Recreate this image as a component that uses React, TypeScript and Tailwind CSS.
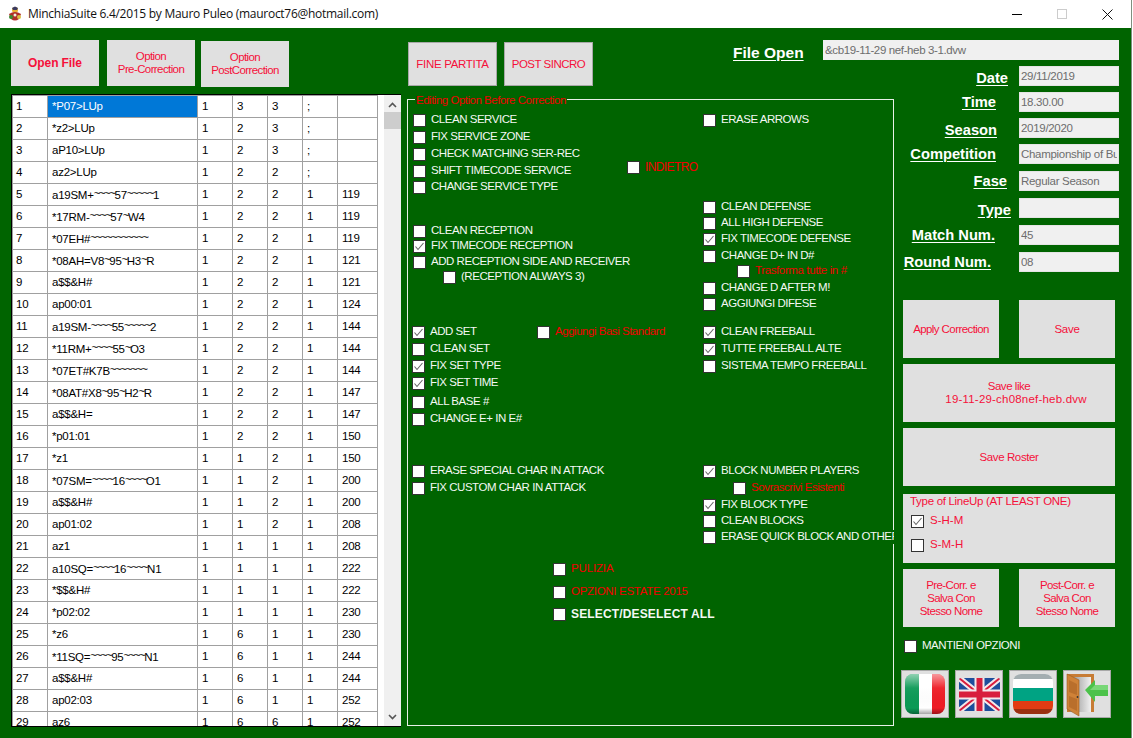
import { ReactNode } from "react";

const rows: string[][] = [
  ["1", "*P07>LUp", "1", "3", "3", ";", ""],
  ["2", "*z2>LUp", "1", "2", "3", ";", ""],
  ["3", "aP10>LUp", "1", "2", "3", ";", ""],
  ["4", "az2>LUp", "1", "2", "2", ";", ""],
  ["5", "a19SM+~~~~57~~~~~1", "1", "2", "2", "1", "119"],
  ["6", "*17RM-~~~~57~W4", "1", "2", "2", "1", "119"],
  ["7", "*07EH#~~~~~~~~~~~", "1", "2", "2", "1", "119"],
  ["8", "*08AH=V8~95~H3~R", "1", "2", "2", "1", "121"],
  ["9", "a$$&H#", "1", "2", "2", "1", "121"],
  ["10", "ap00:01", "1", "2", "2", "1", "124"],
  ["11", "a19SM-~~~~55~~~~~2", "1", "2", "2", "1", "144"],
  ["12", "*11RM+~~~~55~O3", "1", "2", "2", "1", "144"],
  ["13", "*07ET#K7B~~~~~~~", "1", "2", "2", "1", "144"],
  ["14", "*08AT#X8~95~H2~R", "1", "2", "2", "1", "147"],
  ["15", "a$$&H=", "1", "2", "2", "1", "147"],
  ["16", "*p01:01", "1", "2", "2", "1", "150"],
  ["17", "*z1", "1", "1", "2", "1", "150"],
  ["18", "*07SM=~~~~16~~~~O1", "1", "1", "2", "1", "200"],
  ["19", "a$$&H#", "1", "1", "2", "1", "200"],
  ["20", "ap01:02", "1", "1", "2", "1", "208"],
  ["21", "az1", "1", "1", "1", "1", "208"],
  ["22", "a10SQ=~~~~16~~~~N1", "1", "1", "1", "1", "222"],
  ["23", "*$$&H#", "1", "1", "1", "1", "222"],
  ["24", "*p02:02", "1", "1", "1", "1", "230"],
  ["25", "*z6", "1", "6", "1", "1", "230"],
  ["26", "*11SQ=~~~~95~~~~N1", "1", "6", "1", "1", "244"],
  ["27", "a$$&H#", "1", "6", "1", "1", "244"],
  ["28", "ap02:03", "1", "6", "1", "1", "252"],
  ["29", "az6", "1", "6", "6", "1", "252"],
];

// the tildes in the grid are narrow and sit high
function Code({ value }: { value: string }) {
  return (
    <>
      {value.split(/(~+)/).map((part, i) =>
        part.startsWith("~") ? (
          <span key={i} className="align-[2px] tracking-[-1.5px]">
            {part}
          </span>
        ) : (
          part
        )
      )}
    </>
  );
}

function Check({
  label,
  checked,
  red,
  bold,
  className = "",
  labelClass = "tracking-[-0.47px]",
}: {
  label: string;
  checked?: boolean;
  red?: boolean;
  bold?: boolean;
  className?: string;
  labelClass?: string;
}) {
  return (
    <div className={`flex h-[14px] shrink-0 items-center gap-[5px] whitespace-nowrap ${className}`}>
      <span className="flex h-[13px] w-[13px] shrink-0 items-center justify-center border border-[#333] bg-white">
        {checked && (
          <svg width="11" height="11" viewBox="0 0 11 11" fill="none">
            <path d="M1.5 5.5 L4 8.5 L9.5 2" stroke="#666" strokeWidth="1.1" />
          </svg>
        )}
      </span>
      <span className={`${red ? "text-[#f00000]" : "text-[#f4f8f4]"} ${bold ? "text-[12px] font-bold" : "text-[11.5px]"} ${labelClass}`}>
        {label}
      </span>
    </div>
  );
}

function Btn({ children, className = "" }: { children: ReactNode; className?: string }) {
  return (
    <button className={`flex items-center justify-center bg-[#e0e0e0] text-center text-[11.5px] leading-[13px] text-[#f5103a] ${className}`}>
      {children}
    </button>
  );
}

function Field({
  label,
  value,
  labelGap,
  className = "",
}: {
  label: string;
  value: string;
  labelGap: string;
  className?: string;
}) {
  return (
    <div className={`flex h-[20px] items-center justify-end ${className}`}>
      <span className={`text-[14.7px] font-bold text-white underline underline-offset-2 ${labelGap}`}>{label}</span>
      <input
        readOnly
        value={value}
        className="h-[20px] w-[100px] border border-[#e4e4e4] bg-[#f0f0f0] px-[1px] text-[11.5px] tracking-[-0.3px] text-[#6d6d6d] outline-none"
      />
    </div>
  );
}

function FlagButton({ children }: { children: ReactNode }) {
  return (
    <button className="h-[48px] w-[48px] border border-[#a8a8a8] bg-[#e0e0e0]">
      <svg width="46" height="46" viewBox="0 0 46 46">{children}</svg>
    </button>
  );
}

export default function App() {
  return (
    <div className="h-[738px] w-[1133px] overflow-hidden bg-white font-['Liberation_Sans',Arial,sans-serif] text-[11.5px]">
      <div className="flex h-[738px] w-[1132px] flex-col border-r border-[#7f8f7f]">
        {/* title bar */}
        <header className="flex h-[28px] shrink-0 items-center bg-white">
          <svg width="16" height="16" viewBox="0 0 16 16" className="ml-[7px]">
            <circle cx="8" cy="4" r="3" fill="#e8b030" />
            <path d="M5 2 L8 0.5 L11 2 L10 4 L6 4 Z" fill="#3a3a60" />
            <path d="M2 8 Q8 4 14 8 L12 13 Q8 16 4 13 Z" fill="#b03028" />
            <circle cx="4" cy="11" r="2" fill="#3c8a30" />
            <circle cx="12" cy="11" r="2" fill="#d8c040" />
            <circle cx="8" cy="9" r="1.5" fill="#f0f0e0" />
          </svg>
          <span className="ml-[5px] font-['Open_Sans',sans-serif] text-[12px] tracking-[-0.28px] text-[#111]">
            MinchiaSuite 6.4/2015 by Mauro Puleo (mauroct76@hotmail.com)
          </span>
          <div className="ml-auto flex items-center">
            <span className="h-px w-[10px] bg-black" />
            <span className="ml-[35px] h-[10px] w-[10px] border border-[#ccc]" />
            <svg width="11" height="11" viewBox="0 0 11 11" className="ml-[35px] mr-[18px]">
              <path d="M0.5 0.5 L10.5 10.5 M10.5 0.5 L0.5 10.5" stroke="#111" strokeWidth="1" />
            </svg>
          </div>
        </header>

        <main className="flex flex-1 bg-[#006400] pt-[12px]">
          {/* left: buttons and grid */}
          <div className="ml-[11px] w-[390px] shrink-0">
            <div className="flex items-start">
              <Btn className="h-[46px] w-[88px] text-[12px] font-bold tracking-[-0.1px] text-[#f00000]">Open File</Btn>
              <Btn className="ml-[8px] h-[46px] w-[88px] tracking-[-0.6px]">
                Option
                <br />
                Pre-Correction
              </Btn>
              <Btn className="ml-[6px] mt-px h-[46px] w-[88px] tracking-[-0.6px]">
                Option
                <br />
                PostCorrection
              </Btn>
            </div>
            <div className="mt-[7px] flex h-[633px] overflow-hidden border-y border-l border-black bg-[#f0f0f0]">
              <div className="h-full w-[372px] shrink-0 bg-white">
                <table className="w-[366px] table-fixed border-collapse text-[11.5px] tracking-[-0.25px] text-black">
                  <colgroup>
                    <col className="w-[35px]" />
                    <col className="w-[150px]" />
                    <col className="w-[35px]" />
                    <col className="w-[35px]" />
                    <col className="w-[35px]" />
                    <col className="w-[35px]" />
                    <col className="w-[40px]" />
                  </colgroup>
                  <tbody>
                    {rows.map((r, i) => (
                      <tr key={i} className="h-[22px]">
                        {r.map((c, j) => (
                          <td
                            key={j}
                            className={`h-[22px] overflow-hidden whitespace-nowrap border border-[#a0a0a0] py-0 pr-0 ${j === 0 ? "pl-[3px]" : "pl-[4px]"} ${
                              i === 0 && j === 1 ? "bg-[#0078d7] text-white" : ""
                            }`}
                          >
                            <Code value={c} />
                          </td>
                        ))}
                      </tr>
                    ))}
                  </tbody>
                </table>
              </div>
              {/* scrollbar */}
              <div className="flex h-full w-[17px] flex-col items-center">
                <svg width="9" height="6" viewBox="0 0 9 6" className="mt-[7px]">
                  <path d="M1 5 L4.5 1.5 L8 5" stroke="#555" strokeWidth="1.6" fill="none" />
                </svg>
                <div className="mt-[4px] h-[17px] w-full bg-[#cdcdcd]" />
                <svg width="9" height="6" viewBox="0 0 9 6" className="mt-auto mb-[6px]">
                  <path d="M1 1 L4.5 4.5 L8 1" stroke="#555" strokeWidth="1.6" fill="none" />
                </svg>
              </div>
            </div>
          </div>

          {/* middle and right */}
          <div className="ml-[6px] grid w-[712px] shrink-0 grid-cols-[326px_170px_216px] grid-rows-[26px_33px_627px]">
            <div className="col-start-1 row-span-2 row-start-1 flex items-start">
              <Btn className="ml-px mt-[2px] h-[44px] w-[89px] border border-[#a8a8a8] tracking-[-0.3px]">FINE PARTITA</Btn>
              <Btn className="ml-[7px] mt-[2px] h-[44px] w-[89px] border border-[#a8a8a8] tracking-[-0.5px]">POST SINCRO</Btn>
            </div>

            <div className="col-span-2 col-start-2 row-start-1 flex items-start">
              <span className="mt-px w-[90px] text-[15.5px] font-bold text-white underline underline-offset-2">File Open</span>
              <input
                readOnly
                value="&cb19-11-29 nef-heb 3-1.dvw"
                className="h-[20px] w-[296px] bg-[#f0f0f0] px-[2px] text-[11.5px] tracking-[-0.37px] text-[#6d6d6d] outline-none"
              />
            </div>

            {/* editing options */}
            <div className="relative col-span-2 col-start-1 row-start-3 flex h-[627px] w-[487px] border border-[#e8f0e8] pl-[5px] pt-[13px]">
              <span className="absolute -top-[8px] left-[7px] bg-[#006400] px-px tracking-[-0.49px] text-[#f00000]">
                Editing Option Before Correction
              </span>
              <div className="flex w-[214px] shrink-0 flex-col">
                <Check label="CLEAN SERVICE" />
                <Check label="FIX SERVICE ZONE" className="mt-[3px]" />
                <Check label="CHECK MATCHING SER-REC" className="mt-[3px]" />
                <Check label="SHIFT TIMECODE SERVICE" className="mt-[3px]" />
                <Check label="CHANGE SERVICE TYPE" className="mt-[2px]" />
                <Check label="CLEAN RECEPTION" className="mt-[30px]" />
                <Check label="FIX TIMECODE RECEPTION" checked className="mt-px" />
                <Check label="ADD RECEPTION SIDE AND RECEIVER" className="mt-[2px]" />
                <Check label="(RECEPTION ALWAYS 3)" className="ml-[30px] mt-px" />
                <div className="-ml-px mt-[41px] flex">
                  <Check label="ADD SET" checked className="w-[125px]" />
                  <Check label="Aggiungi Basi Standard" red />
                </div>
                <Check label="CLEAN SET" className="-ml-px mt-[3px]" />
                <Check label="FIX SET TYPE" checked className="-ml-px mt-[3px]" />
                <Check label="FIX SET TIME" checked className="-ml-px mt-[3px]" />
                <Check label="ALL BASE #" className="-ml-px mt-[5px]" />
                <Check label="CHANGE E+ IN E#" className="-ml-px mt-[3px]" />
                <Check label="ERASE SPECIAL CHAR IN ATTACK" className="-ml-px mt-[38px]" />
                <Check label="FIX CUSTOM CHAR IN ATTACK" className="-ml-px mt-[3px]" />
                <Check label="PULIZIA" red className="ml-[140px] mt-[67px]" labelClass="tracking-[-0.15px]" />
                <Check label="OPZIONI ESTATE 2015" red className="ml-[140px] mt-[9px]" labelClass="tracking-[-0.3px]" />
                <Check label="SELECT/DESELECT ALL" bold className="ml-[140px] mt-[8px]" labelClass="tracking-[0.15px]" />
              </div>
              <div className="w-[76px] shrink-0 pt-[47px]">
                <Check label="INDIETRO" red labelClass="text-[12px] tracking-[-0.6px]" />
              </div>
              <div className="flex w-[191px] shrink-0 flex-col overflow-hidden">
                <Check label="ERASE ARROWS" />
                <Check label="CLEAN DEFENSE" className="mt-[73px]" />
                <Check label="ALL HIGH DEFENSE" className="mt-[2px]" />
                <Check label="FIX TIMECODE DEFENSE" checked className="mt-[2px]" />
                <Check label="CHANGE D+ IN D#" className="mt-[3px]" />
                <Check label="Trasforma tutte in #" red className="ml-[34px] mt-px" labelClass="tracking-[-0.38px]" />
                <Check label="CHANGE D AFTER M!" className="mt-[3px]" />
                <Check label="AGGIUNGI DIFESE" className="mt-[2px]" />
                <Check label="CLEAN FREEBALL" checked className="mt-[14px]" />
                <Check label="TUTTE FREEBALL ALTE" checked className="mt-[3px]" />
                <Check label="SISTEMA TEMPO FREEBALL" className="mt-[3px]" />
                <Check label="BLOCK NUMBER PLAYERS" checked className="mt-[91px]" />
                <Check label="Sovrascrivi Esistenti" red className="ml-[30px] mt-[3px]" />
                <Check label="FIX BLOCK TYPE" checked className="mt-[3px]" />
                <Check label="CLEAN BLOCKS" className="mt-[2px]" />
                <Check label="ERASE QUICK BLOCK AND OTHER" className="mt-[2px] bg-[#006400]" />
              </div>
            </div>

            {/* right panel */}
            <div className="col-start-3 row-span-2 row-start-2 flex flex-col">
              <Field label="Date" value="29/11/2019" labelGap="mr-[11px] mt-[4px]" />
              <Field label="Time" value="18.30.00" labelGap="mr-[23px]" className="mt-[6px]" />
              <Field label="Season" value="2019/2020" labelGap="mr-[22px] mt-[4px]" className="mt-[6px]" />
              <Field label="Competition" value="Championship of Bulgaria" labelGap="mr-[23px]" className="mt-[6px]" />
              <Field label="Fase" value="Regular Season" labelGap="mr-[12px]" className="mt-[7px]" />
              <Field label="Type" value="" labelGap="mr-[8px] mt-[4px]" className="mt-[7px]" />
              <Field label="Match Num." value="45" labelGap="mr-[24px]" className="mt-[7px]" />
              <Field label="Round Num." value="08" labelGap="mr-[28px]" className="mt-[7px]" />

              <div className="mt-[28px] flex w-[212px] justify-between">
                <Btn className="h-[58px] w-[96px] tracking-[-0.58px]">Apply Correction</Btn>
                <Btn className="h-[58px] w-[96px] tracking-[-0.3px]">Save</Btn>
              </div>
              <Btn className="mt-[6px] h-[58px] w-[212px]">
                <span>
                  <span className="tracking-[-0.45px]">Save like</span>
                  <br />
                  <span className="inline-block pl-[14px] tracking-[0.2px]">19-11-29-ch08nef-heb.dvw</span>
                </span>
              </Btn>
              <Btn className="mt-[6px] h-[58px] w-[212px] tracking-[-0.39px]">Save Roster</Btn>

              <div className="mt-[8px] flex h-[69px] w-[212px] flex-col bg-[#e0e0e0] pl-[8px] text-[#f5103a]">
                <span className="-ml-[1px] leading-[14px] tracking-[-0.3px]">Type of LineUp (AT LEAST ONE)</span>
                <div className="mt-[6px] flex h-[14px] items-center gap-[6px]">
                  <span className="flex h-[13px] w-[13px] items-center justify-center border border-[#333] bg-white">
                    <svg width="11" height="11" viewBox="0 0 11 11" fill="none">
                      <path d="M1.5 5.5 L4 8.5 L9.5 2" stroke="#666" strokeWidth="1.1" />
                    </svg>
                  </span>
                  S-H-M
                </div>
                <div className="mt-[10px] flex h-[14px] items-center gap-[6px]">
                  <span className="h-[13px] w-[13px] border border-[#333] bg-white" />
                  S-M-H
                </div>
              </div>

              <div className="mt-[6px] flex w-[212px] justify-between">
                <Btn className="h-[58px] w-[96px] tracking-[-0.6px]">
                  Pre-Corr. e
                  <br />
                  Salva Con
                  <br />
                  Stesso Nome
                </Btn>
                <Btn className="h-[58px] w-[96px] tracking-[-0.6px]">
                  Post-Corr. e
                  <br />
                  Salva Con
                  <br />
                  Stesso Nome
                </Btn>
              </div>

              <Check label="MANTIENI OPZIONI" className="ml-px mt-[12px]" />

              <div className="-ml-[2px] mt-[17px] flex gap-[6px]">
                <FlagButton>
                  <defs>
                    <linearGradient id="gloss" x1="0" y1="0" x2="0" y2="1">
                      <stop offset="0" stopColor="#fff" stopOpacity="0.55" />
                      <stop offset="0.35" stopColor="#fff" stopOpacity="0.05" />
                      <stop offset="0.85" stopColor="#000" stopOpacity="0" />
                      <stop offset="1" stopColor="#000" stopOpacity="0.35" />
                    </linearGradient>
                    <clipPath id="round">
                      <rect x="3" y="3" width="40" height="40" rx="8" />
                    </clipPath>
                  </defs>
                  <g clipPath="url(#round)">
                    <rect x="3" y="3" width="14" height="40" fill="#0b9a55" />
                    <rect x="17" y="3" width="13" height="40" fill="#fff" />
                    <rect x="30" y="3" width="13" height="40" fill="#ee1c25" />
                    <rect x="3" y="3" width="40" height="40" fill="url(#gloss)" />
                  </g>
                </FlagButton>
                <FlagButton>
                  <defs>
                    <clipPath id="uk">
                      <rect x="3" y="7" width="41" height="33" rx="2" />
                    </clipPath>
                  </defs>
                  <g clipPath="url(#uk)">
                    <rect x="3" y="7" width="41" height="33" fill="#1d4f9c" />
                    <path d="M3 7 L44 40 M44 7 L3 40" stroke="#f4e8ea" strokeWidth="6" />
                    <path d="M3 7 L44 40 M44 7 L3 40" stroke="#d81e3c" strokeWidth="2" />
                    <path d="M23.5 7 V40 M3 23.5 H44" stroke="#f4e8ea" strokeWidth="10" />
                    <path d="M23.5 7 V40 M3 23.5 H44" stroke="#d81e3c" strokeWidth="6" />
                  </g>
                </FlagButton>
                <FlagButton>
                  <defs>
                    <clipPath id="bg">
                      <rect x="3" y="3" width="40" height="40" rx="8" />
                    </clipPath>
                  </defs>
                  <g clipPath="url(#bg)">
                    <rect x="3" y="3" width="40" height="14" fill="#fff" />
                    <rect x="3" y="17" width="40" height="13" fill="#00a383" />
                    <rect x="3" y="30" width="40" height="13" fill="#e23b13" />
                    <rect x="3" y="3" width="40" height="5" fill="#7d8c90" opacity="0.7" />
                    <rect x="3" y="38" width="40" height="5" fill="#6a2a10" opacity="0.6" />
                  </g>
                </FlagButton>
                <FlagButton>
                  <defs>
                    <linearGradient id="inside" x1="0" y1="0" x2="1" y2="0">
                      <stop offset="0" stopColor="#8f8f8f" />
                      <stop offset="1" stopColor="#f0f0f0" />
                    </linearGradient>
                  </defs>
                  <rect x="3" y="3" width="27" height="38" fill="#c77c35" />
                  <rect x="6" y="6" width="21" height="35" fill="url(#inside)" />
                  <path d="M3 3 L15 9 L15 45 L3 38 Z" fill="#cf8238" stroke="#9a5a20" strokeWidth="0.6" />
                  <path d="M5 9 L13 13 V24 L5 21 Z M5 25 L13 28 V40 L5 36 Z" fill="#b96f2c" />
                  <circle cx="13.5" cy="26" r="0.9" fill="#333" />
                  <path d="M21 19 L31 9 L31 14 L44 14 L44 25 L31 25 L31 31 Z" fill="#4cc24a" />
                  <path d="M31 14 L44 14 L44 19 L26 19 Z" fill="#8be08a" opacity="0.7" />
                </FlagButton>
              </div>
            </div>
          </div>
        </main>
      </div>
    </div>
  );
}
